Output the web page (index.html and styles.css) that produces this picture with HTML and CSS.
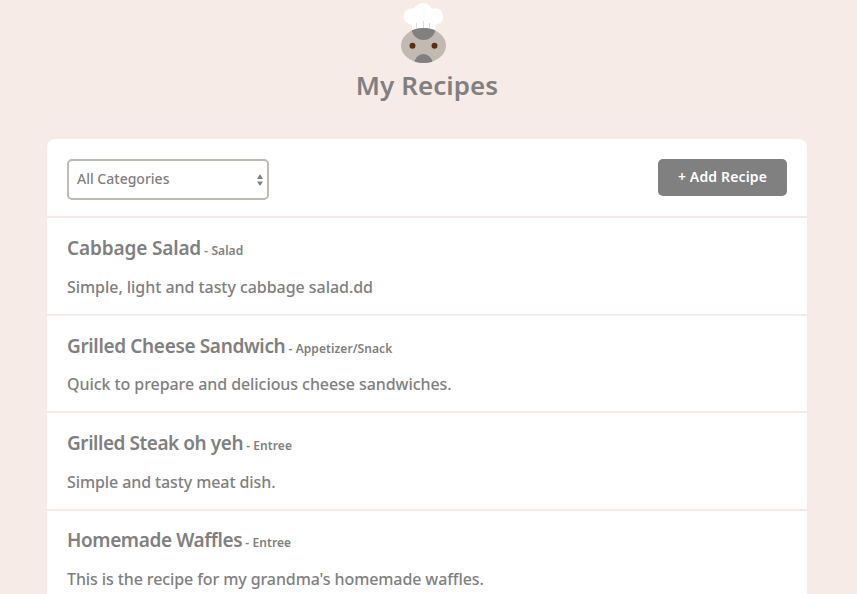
FILE: index.html
```html
<!DOCTYPE html>
<html lang="en">
<head>
<meta charset="utf-8">
<title>My Recipes</title>
<link rel="stylesheet" href="styles.css">
</head>
<body>
<header class="header">
  <svg class="logo" width="48" height="64" viewBox="0 0 48 64" aria-hidden="true">
    <defs><clipPath id="head"><ellipse cx="24.5" cy="45.5" rx="22.5" ry="17.5"/></clipPath></defs>
    <ellipse cx="24.5" cy="45.5" rx="22.5" ry="17.5" fill="#c0bab2"/>
    <g fill="#fff">
      <circle cx="13" cy="16.5" r="8.3"/>
      <circle cx="36" cy="16.500" r="8.3"/>
      <circle cx="24" cy="13" r="10"/>
      <path d="M13 14H36.500V29.500Q24.500 26 13 29.500Z"/>
    </g>
    <g clip-path="url(#head)" fill="#808080">
      <circle cx="24.500" cy="28" r="12"/>
      <circle cx="24.500" cy="63" r="9"/>
    </g>
    <path d="M17.500 23V28M24.500 21V28M30.500 23V28" stroke="#ddd" stroke-width="1"/>
    <circle cx="13.500" cy="45.800" r="3" fill="#5b310c"/>
    <circle cx="35.500" cy="45.800" r="3" fill="#5b310c"/>
  </svg>
  <h1 class="page-title">My Recipes</h1>
</header>
<main class="card">
  <div class="toolbar">
    <div class="select">
      <span>All Categories</span>
      <svg width="6" height="12" viewBox="0 0 6 12" aria-hidden="true"><path d="M0 5L3 0L6 5ZM0 7.500H6L3 12Z" fill="#808080"/></svg>
    </div>
    <button class="button" type="button">+ Add Recipe</button>
  </div>
  <article class="recipe salad">
    <h2 class="title"><span class="name">Cabbage Salad</span><small> - Salad</small></h2>
    <p class="description">Simple, light and tasty cabbage salad.dd</p>
  </article>
  <article class="recipe sandwich">
    <h2 class="title"><span class="name">Grilled Cheese Sandwich</span><small> - Appetizer/Snack</small></h2>
    <p class="description">Quick to prepare and delicious cheese sandwiches.</p>
  </article>
  <article class="recipe steak">
    <h2 class="title"><span class="name">Grilled Steak oh yeh</span><small> - Entree</small></h2>
    <p class="description">Simple and tasty meat dish.</p>
  </article>
  <article class="recipe waffles">
    <h2 class="title"><span class="name">Homemade Waffles</span><small> - Entree</small></h2>
    <p class="description">This is the recipe for my grandma's homemade waffles.</p>
  </article>
</main>
</body>
</html>
```
FILE: styles.css
```css
* { box-sizing: border-box; }
body {
  margin: 0;
  height: 594px;
  overflow: hidden;
  background: #f6ebe6;
  color: #808080;
  font-family: "Noto Sans", sans-serif;
  font-size: 16px;
}
.header {
  display: flex;
  flex-direction: column;
  align-items: center;
  width: 854px;
  height: 139px;
}
.logo { display: block; margin-left: -8px; }
.page-title {
  margin: 3px 0 0;
  font-size: 26px;
  line-height: 36px;
  font-weight: 600;
  letter-spacing: 0.05px;
  white-space: nowrap;
}
.card {
  width: 760px;
  margin-left: 47px;
  background: #fff;
  border-radius: 8px 8px 0 0;
}
.toolbar {
  display: flex;
  justify-content: space-between;
  align-items: flex-start;
  height: 77px;
  padding: 20px 20px 0;
}
.select {
  display: flex;
  align-items: center;
  justify-content: space-between;
  width: 202px;
  height: 41px;
  padding: 0 4px 0 8px;
  border: 2px solid #c0bab2;
  border-radius: 5px;
  font-size: 14px;
  font-weight: 500;
}
.select span { padding-bottom: 2px; }
.button {
  width: 129px;
  height: 37px;
  padding: 0 0 2px;
  border: 0;
  border-radius: 5px;
  background: #808080;
  color: #fff;
  font: 600 14px "Noto Sans", sans-serif;
  letter-spacing: 0.15px;
}
.recipe {
  height: 97.5px;
  padding: 16px 20px 0;
  border-top: 2px solid #f6ebe6;
}
.title {
  margin: 0;
  font-size: 19px;
  line-height: 28px;
  font-weight: 600;
  white-space: nowrap;
}
.title small {
  font-size: 12px;
  font-weight: 600;
  letter-spacing: 0.07px;
  white-space: pre;
}
.description {
  margin: 10px 0 0;
  line-height: 24px;
  font-weight: 500;
  white-space: nowrap;
}
.salad .name { letter-spacing: -0.15px; }
.salad .description { letter-spacing: -0.05px; }
.sandwich .name { letter-spacing: -0.35px; }
.sandwich .description { margin-top: 9px; letter-spacing: -0.07px; }
.steak .name { letter-spacing: -0.45px; }
.steak .description { letter-spacing: -0.1px; }
.waffles { padding-top: 15px; }
.waffles .name { letter-spacing: -0.4px; }
.waffles .description { letter-spacing: -0.1px; }
```
